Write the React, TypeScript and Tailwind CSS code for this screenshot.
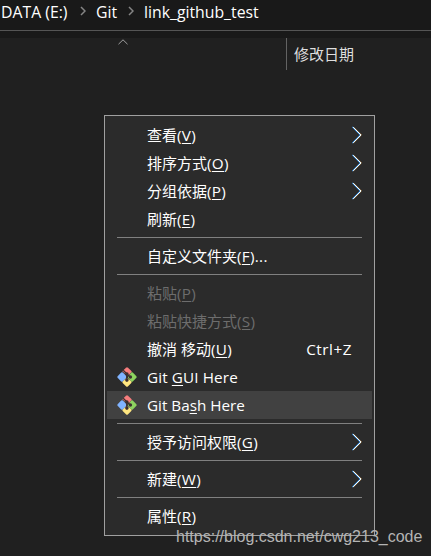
import { clsx } from "clsx";

type Item = {
  label: string;
  before: string;
  accessKey: string;
  after: string;
  arrow?: boolean;
  disabled?: boolean;
  git?: boolean;
  active?: boolean;
  shortcut?: string;
};

const groups: Item[][] = [
  [
    { label: "查看", before: "(", accessKey: "V", after: ")", arrow: true },
    { label: "排序方式", before: "(", accessKey: "O", after: ")", arrow: true },
    { label: "分组依据", before: "(", accessKey: "P", after: ")", arrow: true },
    { label: "刷新", before: "(", accessKey: "E", after: ")" },
  ],
  [{ label: "自定义文件夹", before: "(", accessKey: "F", after: ")..." }],
  [
    { label: "粘贴", before: "(", accessKey: "P", after: ")", disabled: true },
    { label: "粘贴快捷方式", before: "(", accessKey: "S", after: ")", disabled: true },
    { label: "撤消 移动", before: "(", accessKey: "U", after: ")", shortcut: "Ctrl+Z" },
    { label: "", before: "Git ", accessKey: "G", after: "UI Here", git: true },
    { label: "", before: "Git Ba", accessKey: "s", after: "h Here", git: true, active: true },
  ],
  [{ label: "授予访问权限", before: "(", accessKey: "G", after: ")", arrow: true }],
  [{ label: "新建", before: "(", accessKey: "W", after: ")", arrow: true }],
  [{ label: "属性", before: "(", accessKey: "R", after: ")" }],
];

function GitIcon() {
  return (
    <svg width="20" height="20" viewBox="0 0 20 20" className="block">
      <path d="M9 0.7Q10 -0.1 11 0.7L14.4 4.1Q15 4.9 14.3 5.6L11 8.9 5.3 4.3Z" fill="#f77d7d" />
      <path d="M4.2 5.6Q5 5 5.8 5.6L9.3 9.1V11L5.8 14.4Q5 15 4.2 14.4L0.6 10.8Q0 10 0.6 9.2Z" fill="#80b3ff" />
      <path d="M14.2 5.6Q15 5 15.8 5.6L19.4 9.2Q20 10 19.4 10.8L15.8 14.4Q15 15 14.2 14.4L10.8 10.6Z" fill="#8dd35f" />
      <path d="M9.2 11.3H10.8L14.3 14.5Q15 15.2 14.3 16L10.8 19.4Q10 20 9.2 19.4L5.7 16Q5 15.2 5.7 14.5Z" fill="#ffe680" />
      <path d="M6.2 3.2 9.8 6.8V13M10 7 13.2 10" fill="none" stroke="#3b2f2f" strokeWidth="1.3" />
      <circle cx="9.9" cy="6.9" r="1.7" fill="#3b2f2f" />
      <circle cx="9.9" cy="13.1" r="1.8" fill="#3b2f2f" />
      <circle cx="13.4" cy="10" r="1.7" fill="#3b2f2f" />
    </svg>
  );
}

// thin chevron with the coloured fringes of subpixel rendering
function SubmenuArrow() {
  return (
    <svg width="10" height="18" viewBox="0 0 10 18" className="block" fill="none">
      <path d="M0.4 0.9 8.5 9 0.4 17.1" stroke="#3f9cf5" strokeWidth="1.1" />
      <path d="M1.7 1.1 9.6 9 1.7 16.9" stroke="#d99a55" strokeWidth="0.6" />
      <path d="M1.2 1.2 9 9 1.2 16.8" stroke="#f4ffff" strokeWidth="1" />
    </svg>
  );
}

function MenuItem({ item }: { item: Item }) {
  return (
    <div
      className={clsx(
        "flex h-7 items-center px-[10px] text-[15px] leading-7",
        item.active && "bg-[#414141]",
        item.disabled ? "text-[#6d6d6d]" : "text-white"
      )}
    >
      <div className="w-[30px] shrink-0">{item.git && <GitIcon />}</div>
      <span className="whitespace-nowrap">
        {item.label}
        <span className={clsx("text-[15.25px]", item.git ? !item.active && "tracking-[0.12px]" : "tracking-[0.3px]")}>
          {item.before}
          <span className="underline decoration-1 underline-offset-2">{item.accessKey}</span>
          {item.after}
        </span>
      </span>
      {item.shortcut && (
        <span className="ml-auto pr-[10px] text-[15.25px] tracking-[0.55px]">{item.shortcut}</span>
      )}
      {item.arrow && (
        <span className="ml-auto">
          <SubmenuArrow />
        </span>
      )}
    </div>
  );
}

function CrumbArrow() {
  return (
    <svg width="6" height="10" viewBox="0 0 6 10" fill="none" className="-mt-[3px] shrink-0">
      <path d="M1 1 5 5 1 9" stroke="#858585" strokeWidth="1.5" />
    </svg>
  );
}

export default function App() {
  return (
    <div className="relative h-[556px] w-[431px] overflow-hidden bg-[#202020] font-['Open_Sans','Noto_Sans_CJK_SC',sans-serif]">
      <header className="h-[38px] bg-[#191919]">
        <div className="flex h-[31px] items-center border-b border-[#555] pb-[5px] pl-px text-[15.8px] whitespace-nowrap text-white">
          <span className="w-[79px]">DATA (E:)</span>
          <CrumbArrow />
          <span className="w-[42px] pl-[10px]">Git</span>
          <CrumbArrow />
          <span className="pl-[10px]">link_github_test</span>
        </div>
      </header>
      <div className="flex h-8">
        <div className="flex w-[287px] justify-end border-r border-[#636363] pr-[158px]">
          <svg width="10" height="6" viewBox="0 0 10 6" fill="none" className="mt-px">
            <path d="M0.5 5.2 5 0.8 9.5 5.2" stroke="#a0a0a0" />
          </svg>
        </div>
        <span className="pl-[7px] text-[15px] leading-8 text-[#dedede]">修改日期</span>
      </div>

      <div className="absolute top-[115px] left-[104px] h-[421px] w-[271px] border border-[#a0a0a0] bg-[#2b2b2b] px-[2px] py-[5px]">
        {groups.map((group, index) => (
          <div key={index}>
            {index > 0 && <div className="mx-[10px] my-1 h-px bg-[#808080]" />}
            {group.map((item) => (
              <MenuItem key={item.label + item.accessKey} item={item} />
            ))}
          </div>
        ))}
      </div>

      <div className="absolute top-[527px] left-[176px] font-['Liberation_Sans',Arial,sans-serif] text-base leading-5 whitespace-nowrap text-[#b4b4b4]">
        https://blog.csdn.net/cwg213_code
      </div>
    </div>
  );
}
